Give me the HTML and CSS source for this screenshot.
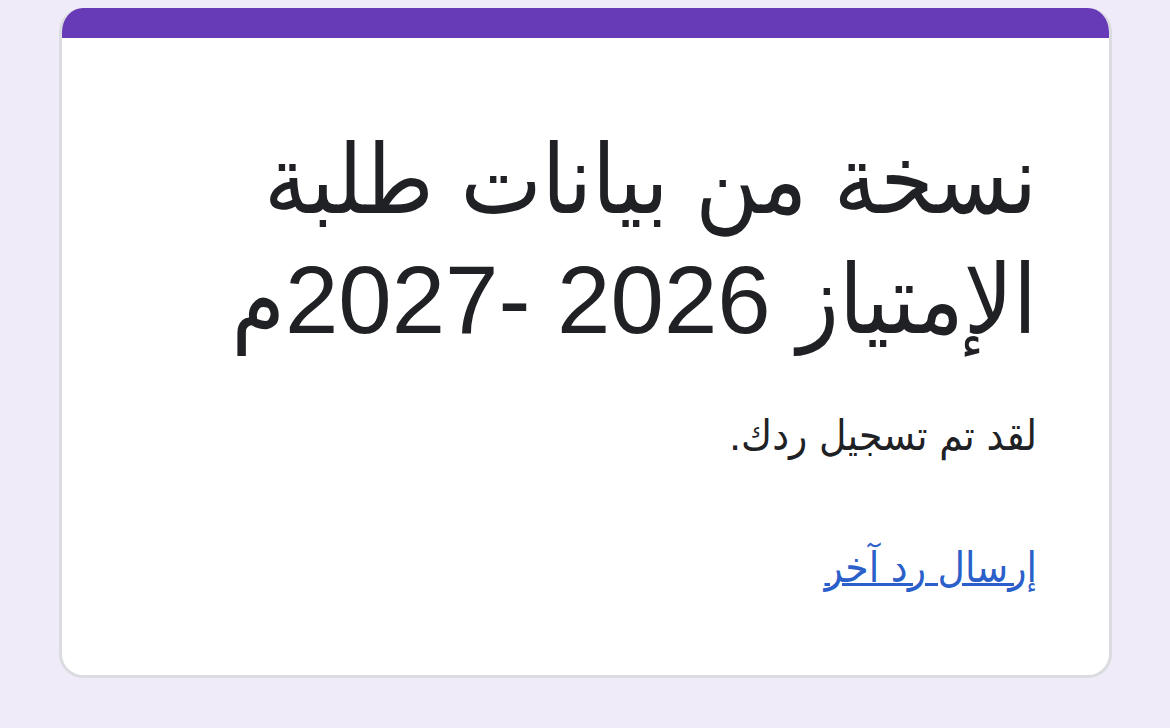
FILE: index.html
```html
<!DOCTYPE html>
<html lang="ar" dir="rtl">
<head>
<meta charset="utf-8">
<title>نسخة من بيانات طلبة الإمتياز 2026 -2027م</title>
<link rel="stylesheet" href="styles.css">
</head>
<body>
<main class="page">
  <section class="card">
    <div class="card-top"></div>
    <div class="card-body">
      <h1 class="title">نسخة من بيانات طلبة الإمتياز 2026 -2027م</h1>
      <p class="message">لقد تم تسجيل ردك.</p>
      <a class="link" href="#">إرسال رد آخر</a>
    </div>
  </section>
</main>
</body>
</html>
```
FILE: styles.css
```css
html, body {
  margin: 0;
  padding: 0;
  background: #f0ebf8;
}
body {
  font-family: "Liberation Sans", "DejaVu Sans Condensed", "DejaVu Sans", sans-serif;
  color: #202124;
}
.page {
  padding: 8px 58px 0 59px;
}
.card {
  background: #fff;
  border-radius: 24px;
  overflow: hidden;
  border: 3px solid #dadce0;
  border-top: 0;
  box-sizing: border-box;
}
.card-top {
  height: 30px;
  background: #673ab7;
  margin: 0 -3px;
}
.card-body {
  padding: 82px 72px 77px 72px;
  display: flex;
  flex-direction: column;
  align-items: flex-start;
}
.title {
  margin: 0;
  font-size: 96px;
  line-height: 120px;
  font-weight: 400;
}
.message {
  margin: 46px 0 0;
  font-size: 42px;
  line-height: 60px;
}
.link {
  margin-top: 72px;
  font-size: 42px;
  line-height: 60px;
  color: #2b5fc9;
  text-decoration: underline;
  text-decoration-thickness: 3px;
  text-underline-offset: 1px;
}
```
